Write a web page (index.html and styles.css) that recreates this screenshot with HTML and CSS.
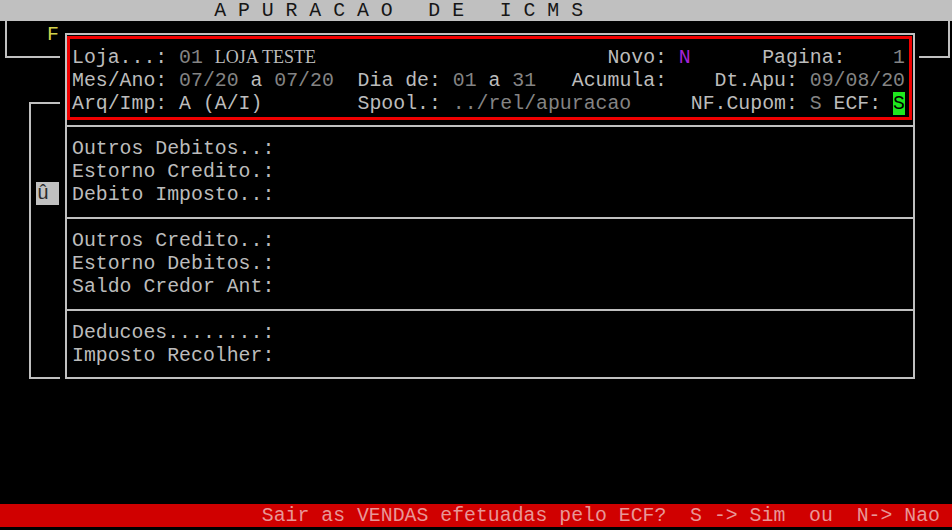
FILE: index.html
```html
<!DOCTYPE html>
<html lang="pt-BR">

<head>
    <meta charset="UTF-8">
    <meta name="viewport" content="width=device-width, initial-scale=1.0">
    <title>Apuracao de ICMS</title>
    <link rel="stylesheet" href="styles.css">
</head>

<body>
    <div class="term-title">A P U R A C A O   D E   I C M S</div>

    <div class="term-screen">
        <div class="term-gutter-left">
            <div class="term-corner-left"><span class="term-yellow">F</span></div>
            <div class="term-frame-left"><span class="term-marker">û</span></div>
        </div>

        <div class="term-panel">
            <div class="term-header">
                <div class="term-row"><span class="term-lead">Loja...: <span class="term-dim">01</span> <span class="term-serif">LOJA TESTE</span></span>Novo: <span class="term-magenta">N</span>      Pagina:    <span class="term-dim">1</span></div>
                <div class="term-row">Mes/Ano: <span class="term-dim">07/20</span> a <span class="term-dim">07/20</span>  Dia de: <span class="term-dim">01</span> a <span class="term-dim">31</span>   Acumula:    Dt.Apu: <span class="term-dim">09/08/20</span></div>
                <div class="term-row">Arq/Imp: A (A/I)        Spool.: <span class="term-dim">../rel/apuracao</span>     NF.Cupom: <span class="term-dim">S</span> ECF: <span class="term-green">S</span></div>
            </div>

            <div class="term-section">
                <div class="term-row">Outros Debitos..:</div>
                <div class="term-row">Estorno Credito.:</div>
                <div class="term-row">Debito Imposto..:</div>
            </div>

            <div class="term-section">
                <div class="term-row">Outros Credito..:</div>
                <div class="term-row">Estorno Debitos.:</div>
                <div class="term-row">Saldo Credor Ant:</div>
            </div>

            <div class="term-section term-section-last">
                <div class="term-row">Deducoes........:</div>
                <div class="term-row">Imposto Recolher:</div>
            </div>
        </div>

        <div class="term-gutter-right">
            <div class="term-corner-right"></div>
        </div>
    </div>

    <div class="term-status">Sair as VENDAS efetuadas pelo ECF?  S -> Sim  ou  N-> Nao</div>
</body>

</html>
```

FILE: styles.css
```css
html,
body {
    margin: 0;
    padding: 0;
}

body {
    width: 952px;
    height: 530px;
    overflow: hidden;
    display: flex;
    flex-direction: column;
    background-color: #000;
    color: #bcbcbc;
    font-family: "Liberation Mono", "DejaVu Sans Mono", monospace;
    font-size: 19.83px;
    line-height: 23px;
}

/* top title bar */
.term-title {
    flex-shrink: 0;
    box-sizing: border-box;
    height: 21px;
    padding-top: 1px;
    padding-left: 18ch;
    line-height: 20px;
    background-color: #c0c0c0;
    color: #161616;
    white-space: pre;
}

.term-screen {
    flex: 1;
    display: flex;
    flex-direction: row;
}

/* left side frames */
.term-gutter-left {
    flex-shrink: 0;
    width: 65px;
}

.term-corner-left {
    box-sizing: border-box;
    width: 55px;
    height: 37px;
    margin-left: 5px;
    padding-top: 2px;
    padding-right: 1px;
    border-left: 2px solid #c0c0c0;
    border-bottom: 2px solid #c0c0c0;
    text-align: right;
}

.term-yellow {
    color: #d2d24c;
}

.term-frame-left {
    box-sizing: border-box;
    width: 31px;
    height: 277px;
    margin-top: 44px;
    margin-left: 29px;
    padding-top: 78px;
    padding-left: 5px;
    border-top: 2px solid #c0c0c0;
    border-left: 2px solid #c0c0c0;
    border-bottom: 2px solid #c0c0c0;
}

.term-marker {
    display: block;
    width: 23px;
    height: 23px;
    padding-left: 1px;
    box-sizing: border-box;
    background-color: #c0c0c0;
    color: #2a2a2a;
}

/* main panel */
.term-panel {
    box-sizing: border-box;
    flex-shrink: 0;
    width: 850px;
    height: 346px;
    margin-top: 12px;
    padding-top: 1px;
    border: 2px solid #c0c0c0;
}

.term-header {
    box-sizing: border-box;
    height: 84px;
    margin-right: 1px;
    margin-bottom: 5px;
    padding: 7px 2px 2px;
    border: 3px solid #f00000;
}

.term-row {
    height: 23px;
    white-space: pre;
}

.term-lead {
    display: inline-block;
    width: 45ch;
}

.term-serif {
    font-family: "Liberation Serif", "DejaVu Serif", serif;
    font-size: 18px;
}

.term-dim {
    color: #848484;
}

.term-magenta {
    color: #a624d6;
}

.term-green {
    background-color: #1ee81e;
    color: #000;
}

.term-section {
    height: 92px;
    box-sizing: border-box;
    padding: 10px 5px 0;
    border-top: 2px solid #c0c0c0;
}

.term-section-last {
    height: 68px;
}

/* right side frame */
.term-gutter-right {
    flex: 1;
}

.term-corner-right {
    box-sizing: border-box;
    width: 31px;
    height: 37px;
    margin-left: 4px;
    border-right: 2px solid #c0c0c0;
    border-bottom: 2px solid #c0c0c0;
}

/* bottom status line */
.term-status {
    flex-shrink: 0;
    height: 23px;
    margin-bottom: 3px;
    padding-left: 22ch;
    background-color: #d00000;
    color: #e89696;
    white-space: pre;
}
```
